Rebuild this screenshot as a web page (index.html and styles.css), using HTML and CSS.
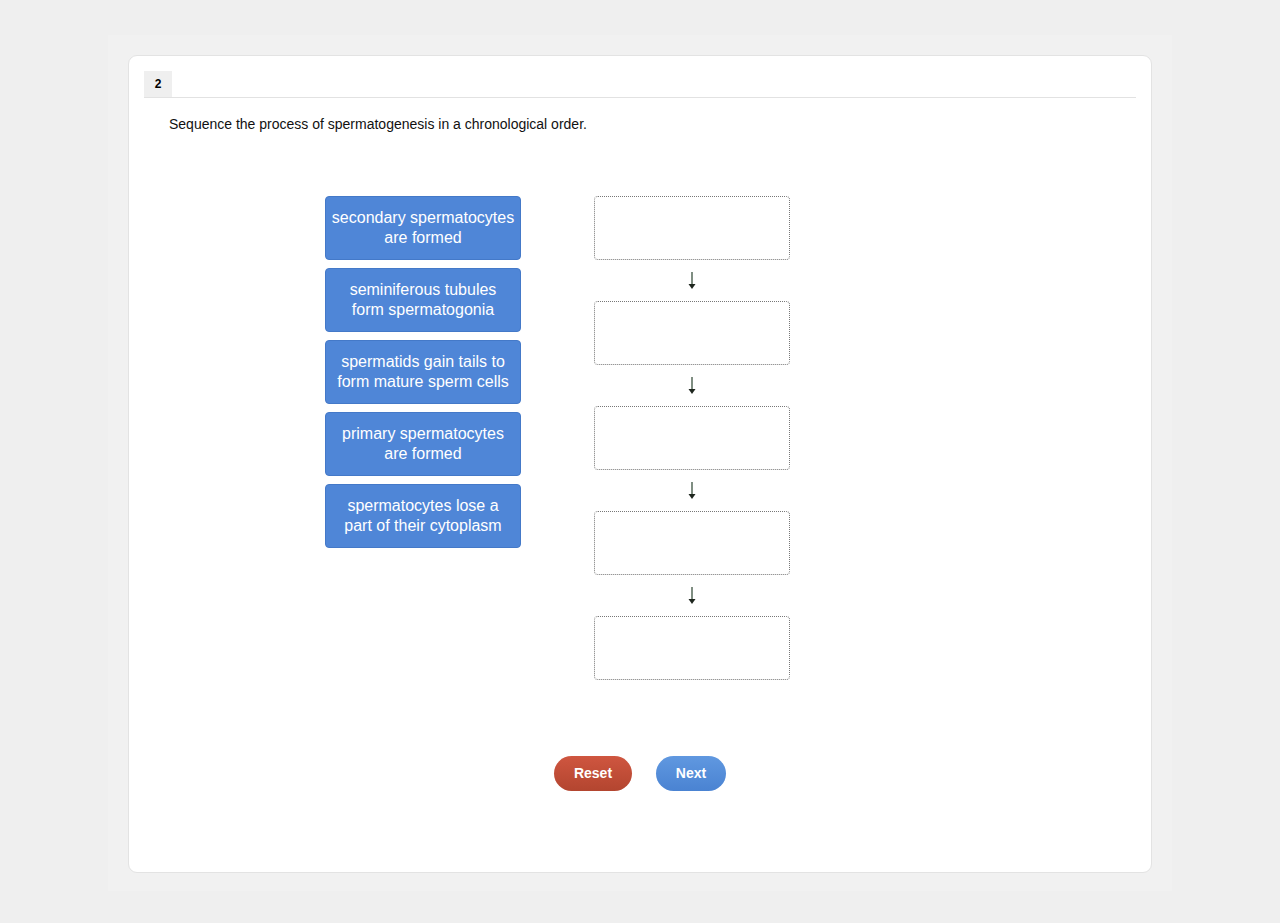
FILE: index.html
```html
<!DOCTYPE html>
<html>
<head>
<meta charset="utf-8">
<link rel="stylesheet" href="styles.css">
</head>
<body>
<div class="frame">
  <div class="card">
    <div class="tabbar"><span class="tab">2</span></div>
    <p class="question">Sequence the process of spermatogenesis in a chronological order.</p>
    <div class="board">
      <div class="items">
        <div class="item">secondary spermatocytes<br>are formed</div>
        <div class="item">seminiferous tubules<br>form spermatogonia</div>
        <div class="item">spermatids gain tails to<br>form mature sperm cells</div>
        <div class="item">primary spermatocytes<br>are formed</div>
        <div class="item">spermatocytes lose a<br>part of their cytoplasm</div>
      </div>
      <div class="slots">
        <div class="slot"></div>
        <div class="arrow"><svg width="10" height="18" viewBox="0 0 10 18"><line x1="5" y1="0" x2="5" y2="13" stroke="#7f8e82" stroke-width="2"/><polygon points="1.5,12 8.5,12 5,17" fill="#1e261e"/></svg></div>
        <div class="slot"></div>
        <div class="arrow"><svg width="10" height="18" viewBox="0 0 10 18"><line x1="5" y1="0" x2="5" y2="13" stroke="#7f8e82" stroke-width="2"/><polygon points="1.5,12 8.5,12 5,17" fill="#1e261e"/></svg></div>
        <div class="slot"></div>
        <div class="arrow"><svg width="10" height="18" viewBox="0 0 10 18"><line x1="5" y1="0" x2="5" y2="13" stroke="#7f8e82" stroke-width="2"/><polygon points="1.5,12 8.5,12 5,17" fill="#1e261e"/></svg></div>
        <div class="slot"></div>
        <div class="arrow"><svg width="10" height="18" viewBox="0 0 10 18"><line x1="5" y1="0" x2="5" y2="13" stroke="#7f8e82" stroke-width="2"/><polygon points="1.5,12 8.5,12 5,17" fill="#1e261e"/></svg></div>
        <div class="slot"></div>
      </div>
    </div>
    <div class="actions">
      <button class="btn reset">Reset</button>
      <button class="btn next">Next</button>
    </div>
  </div>
</div>
</body>
</html>
```

FILE: styles.css
```css
html, body {
  margin: 0;
  padding: 0;
  background: #efefef;
  font-family: "Liberation Sans", Arial, sans-serif;
}
.frame {
  width: 1024px;
  margin: 35px auto 0;
  padding: 20px 20px 18px;
  background: #f1f1f1;
}
.card {
  box-sizing: border-box;
  width: 1024px;
  height: 818px;
  background: #ffffff;
  border: 1px solid #e3e3e3;
  border-radius: 9px;
  padding: 15px 15px 0 15px;
}
.tabbar {
  display: flex;
  border-bottom: 1px solid #e2e2e2;
  height: 26px;
}
.tab {
  width: 28px;
  height: 26px;
  background: #efefef;
  font-size: 12px;
  font-weight: bold;
  color: #000;
  display: flex;
  align-items: center;
  justify-content: center;
}
.question {
  margin: 18px 0 0 25px;
  font-size: 14px;
  line-height: 16px;
  color: #111;
}
.board {
  display: flex;
  gap: 73px;
  margin: 64px 0 0 181px;
}
.items {
  display: flex;
  flex-direction: column;
  gap: 8px;
}
.item {
  box-sizing: border-box;
  width: 196px;
  height: 64px;
  background: #4f86d7;
  border: 1px solid #4479c8;
  border-radius: 4px;
  color: #fff;
  font-size: 16px;
  line-height: 20px;
  display: flex;
  align-items: center;
  justify-content: center;
  text-align: center;
  padding: 0;
  white-space: nowrap;
}
.slots {
  display: flex;
  flex-direction: column;
}
.slot {
  box-sizing: border-box;
  width: 196px;
  height: 64px;
  border: 1px dotted #777;
  border-radius: 4px;
}
.arrow {
  height: 41px;
  display: flex;
  align-items: center;
  justify-content: center;
}
.arrow svg {
  display: block;
}
.actions {
  display: flex;
  justify-content: center;
  gap: 24px;
  margin-top: 76px;
}
.btn {
  height: 35px;
  border: none;
  border-radius: 18px;
  color: #fff;
  font-family: "Liberation Sans", Arial, sans-serif;
  font-size: 14px;
  font-weight: bold;
  line-height: 35px;
  padding: 0;
}
.reset {
  width: 78px;
  background: linear-gradient(#cf5640, #b3452f);
}
.next {
  width: 70px;
  background: linear-gradient(#6098e0, #4a83d2);
}
```
